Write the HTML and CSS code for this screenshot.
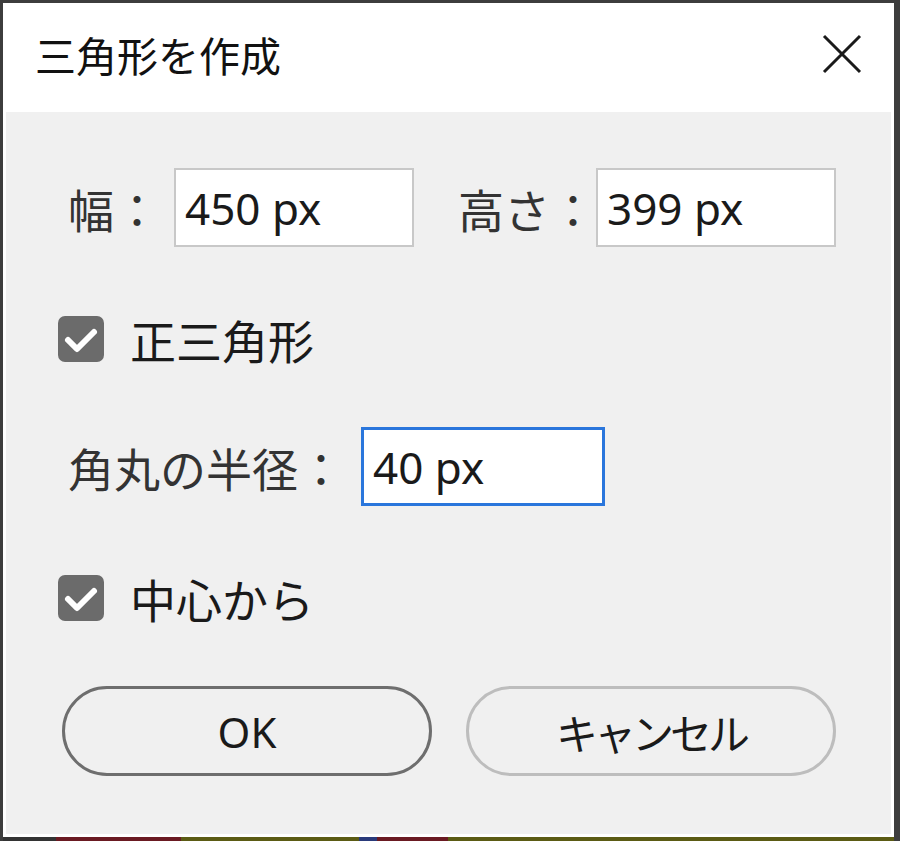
FILE: index.html
```html
<!DOCTYPE html>
<html lang="ja">
<head>
    <meta charset="UTF-8">
    <meta name="viewport" content="width=device-width, initial-scale=1.0">
    <title>三角形を作成</title>
    <link rel="stylesheet" href="styles.css">
</head>
<body>
    <div class="frame">
        <div class="title-bar">
            <span class="title">三角形を作成</span>
            <button class="close-btn" aria-label="閉じる">
                <svg width="40" height="40" viewBox="0 0 40 40">
                    <path d="M2 2 L38 38 M38 2 L2 38" stroke="#1a1a1a" stroke-width="3" fill="none"/>
                </svg>
            </button>
        </div>
        <div class="dialog-body">
            <div class="field-row">
                <label class="field-label" for="width">幅：</label>
                <input class="field-input" type="text" id="width" value="450 px">
                <label class="field-label label-height" for="height">高さ：</label>
                <input class="field-input" type="text" id="height" value="399 px">
            </div>
            <div class="check-row">
                <span class="check-box">
                    <svg width="46" height="46" viewBox="0 0 46 46">
                        <rect x="0" y="0" width="46" height="46" rx="7" fill="#6b6b6b"/>
                        <path d="M10 24 L19 33 L36 16" stroke="#fff" stroke-width="6" fill="none" stroke-linecap="round" stroke-linejoin="round"/>
                    </svg>
                </span>
                <span class="check-label">正三角形</span>
            </div>
            <div class="field-row">
                <label class="field-label label-radius" for="radius">角丸の半径：</label>
                <input class="field-input focused" type="text" id="radius" value="40 px">
            </div>
            <div class="check-row">
                <span class="check-box">
                    <svg width="46" height="46" viewBox="0 0 46 46">
                        <rect x="0" y="0" width="46" height="46" rx="7" fill="#6b6b6b"/>
                        <path d="M10 24 L19 33 L36 16" stroke="#fff" stroke-width="6" fill="none" stroke-linecap="round" stroke-linejoin="round"/>
                    </svg>
                </span>
                <span class="check-label">中心から</span>
            </div>
            <div class="button-row">
                <button class="dialog-btn default-btn">OK</button>
                <button class="dialog-btn cancel-btn">キャンセル</button>
            </div>
        </div>
        <div class="desktop-strip"></div>
    </div>
</body>
</html>
```

FILE: styles.css
```css
body {
    margin: 0;
    background-color: #3d3d3d;
    font-family: "Noto Sans", "Noto Sans CJK JP", sans-serif;
}
.frame {
    width: 900px;
    height: 841px;
    box-sizing: border-box;
    border-top: 3px solid #3d3d3d;
    border-left: 3px solid #3d3d3d;
    border-right: 6px solid #3d3d3d;
    display: flex;
    flex-direction: column;
    background-color: #ffffff;
}
.title-bar {
    height: 109px;
    box-sizing: border-box;
    display: flex;
    align-items: center;
    justify-content: space-between;
    padding: 0 32px 8px 32px;
    background-color: #ffffff;
}
.title {
    font-family: "Noto Sans CJK JP", sans-serif;
    font-size: 41px;
    color: #111;
}
.close-btn {
    border: none;
    background: none;
    padding: 0;
    width: 40px;
    height: 40px;
    display: flex;
}
.dialog-body {
    flex: 1;
    margin: 0 3px 3px 3px;
    background-color: #f0f0f0;
    padding: 56px 0 0 0;
    display: flex;
    flex-direction: column;
    gap: 65px;
}
.field-row {
    display: flex;
    align-items: center;
    padding-left: 62px;
    height: 79px;
}
.field-label {
    font-family: "Noto Sans CJK JP", sans-serif;
    font-size: 46px;
    color: #333;
    margin-right: 14px;
}
.label-height {
    margin-left: 44px;
    margin-right: 0;
}
.label-radius {
    margin-right: 17px;
}
.field-input {
    width: 240px;
    height: 79px;
    box-sizing: border-box;
    border: 2px solid #c8c8c8;
    background-color: #ffffff;
    padding: 0 9px;
    font-family: "Noto Sans", sans-serif;
    font-size: 44px;
    color: #1a1a1a;
    outline: none;
}
.field-input.focused {
    border: 3px solid #2a76dc;
    width: 244px;
    padding: 0 9px;
}
.check-row {
    display: flex;
    align-items: center;
    padding: 4px 0 0 52px;
    height: 46px;
}
.check-box {
    display: flex;
    width: 46px;
    height: 46px;
}
.check-label {
    font-family: "Noto Sans CJK JP", sans-serif;
    font-size: 46px;
    color: #1a1a1a;
    margin-left: 26px;
}
.button-row {
    display: flex;
    gap: 34px;
    padding-left: 56px;
}
.dialog-btn {
    width: 370px;
    height: 90px;
    border-radius: 45px;
    background-color: #f0f0f0;
    font-family: "Noto Sans", "Noto Sans CJK JP", sans-serif;
    font-size: 42px;
    color: #1a1a1a;
    cursor: pointer;
}
.default-btn {
    border: 3px solid #6e6e6e;
    padding-right: 6px;
}
.cancel-btn {
    border: 3px solid #bdbdbd;
    letter-spacing: -4px;
}
.desktop-strip {
    height: 4px;
    background: linear-gradient(to right, #333 0 6%, #6a1a22 6% 20%, #5b5b14 20% 40%, #2a3a7a 40% 42%, #6a1a22 42% 50%, #5b5b14 50% 100%);
}
```
